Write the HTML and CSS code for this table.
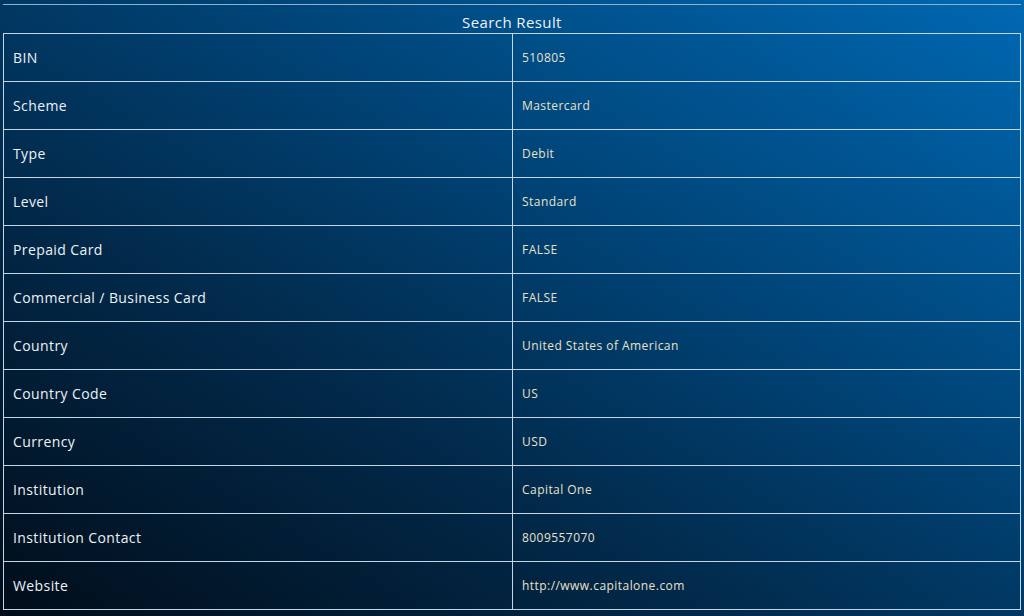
FILE: index.html
```html
<!DOCTYPE html>
<html>
<head>
<meta charset="utf-8">
<link rel="stylesheet" href="styles.css">
</head>
<body>
<div class="page">
  <div class="result">
    <h2 class="title">Search Result</h2>
    <table class="info">
      <tr><td class="label">BIN</td><td class="value">510805</td></tr>
      <tr><td class="label">Scheme</td><td class="value">Mastercard</td></tr>
      <tr><td class="label">Type</td><td class="value">Debit</td></tr>
      <tr><td class="label">Level</td><td class="value">Standard</td></tr>
      <tr><td class="label">Prepaid Card</td><td class="value">FALSE</td></tr>
      <tr><td class="label">Commercial / Business Card</td><td class="value">FALSE</td></tr>
      <tr><td class="label">Country</td><td class="value">United States of American</td></tr>
      <tr><td class="label">Country Code</td><td class="value">US</td></tr>
      <tr><td class="label">Currency</td><td class="value">USD</td></tr>
      <tr><td class="label">Institution</td><td class="value">Capital One</td></tr>
      <tr><td class="label">Institution Contact</td><td class="value">8009557070</td></tr>
      <tr><td class="label">Website</td><td class="value">http://www.capitalone.com</td></tr>
    </table>
  </div>
</div>
</body>
</html>
```
FILE: styles.css
```css
html, body {
  margin: 0;
  padding: 0;
  height: 100%;
}
body {
  background: linear-gradient(to top right, #010d19 0%, #02294a 35%, #004274 60%, #0068b2 100%);
  font-family: "Open Sans", "Liberation Sans", sans-serif;
  color: #e9eef3;
  overflow: hidden;
}
.page {
  padding: 4px 3px 0 3px;
}
.result {
  border-top: 1px solid #8fb2cf;
}
.title {
  margin: 0;
  height: 28px;
  box-sizing: border-box;
  padding-top: 6px;
  font-size: 15px;
  line-height: 22px;
  font-weight: 400;
  letter-spacing: 0.4px;
  text-align: center;
  color: #eef2f6;
}
.info {
  width: 1018px;
  border-collapse: collapse;
  table-layout: fixed;
}
.info td {
  border: 1px solid #c3d6e6;
  height: 48px;
  padding: 0 0 0 9px;
  box-sizing: border-box;
  vertical-align: middle;
}
.label {
  width: 509px;
  font-size: 14px;
  letter-spacing: 0.4px;
  color: #eef2f6;
}
.value {
  font-size: 12px;
  color: #e8e1c9;
  letter-spacing: 0.45px;
}
```
